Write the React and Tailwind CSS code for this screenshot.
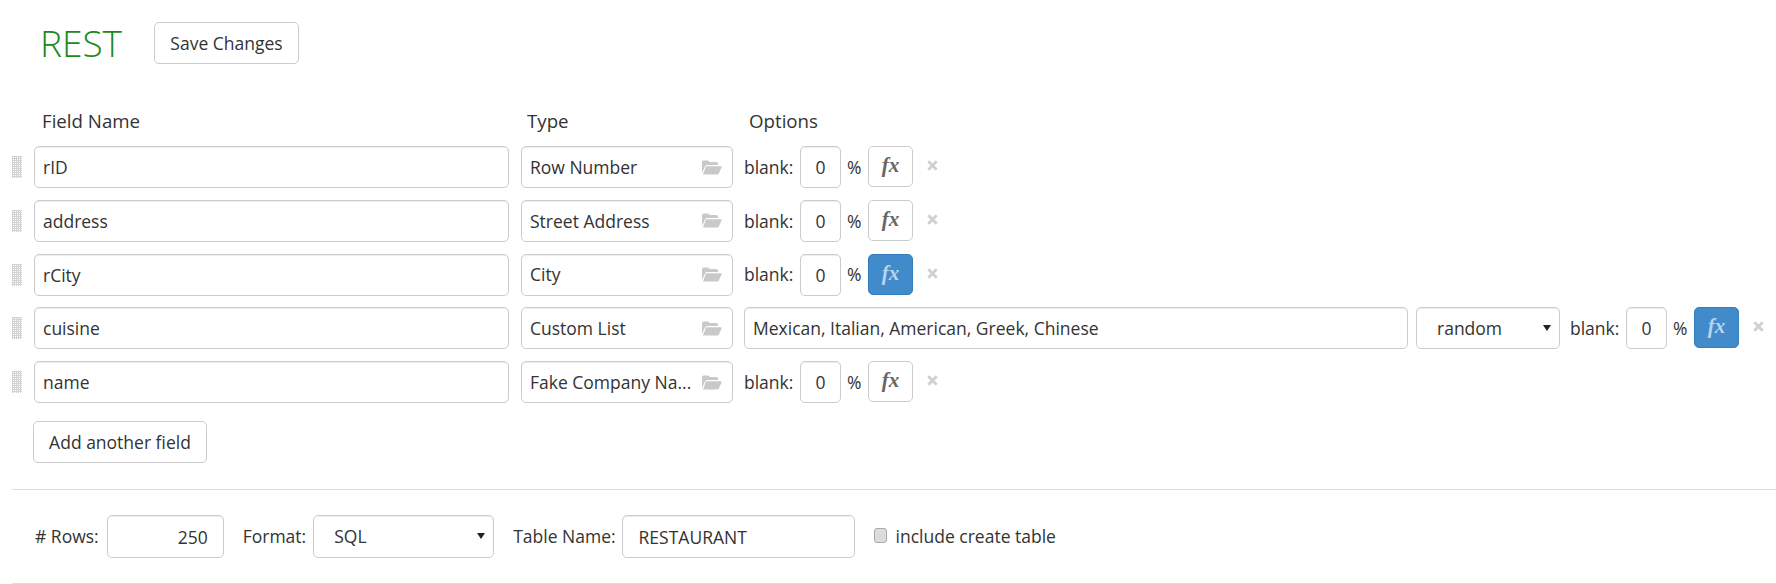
const rows = [
  { name: "rID", type: "Row Number" },
  { name: "address", type: "Street Address" },
  { name: "rCity", type: "City", fx: true },
  { name: "cuisine", type: "Custom List", fx: true, list: "Mexican, Italian, American, Greek, Chinese" },
  { name: "name", type: "Fake Company Na..." },
];

const inputCls =
  "h-full rounded-[5px] border border-[#ccc] bg-white text-[17.5px] text-[#333] outline-none shadow-[inset_0_1px_1px_rgba(0,0,0,0.075)]";

function DragHandle() {
  return (
    <svg width="10" height="22" className="ml-[1px] shrink-0">
      <defs>
        <pattern id="dots" width="2" height="2" patternUnits="userSpaceOnUse">
          <rect width="1" height="2" fill="#d2d2d2" />
          <rect width="2" height="1" fill="#d2d2d2" />
        </pattern>
      </defs>
      <rect width="10" height="22" fill="url(#dots)" />
    </svg>
  );
}

function FolderOpen() {
  return (
    <svg width="20" height="15" viewBox="0 0 20 15" fill="#c9c9c9" className="shrink-0">
      <path d="M0 2 Q0 0.5 1.5 0.5 H6 Q7 0.5 7.5 2 H14.5 Q16 2 16 3.5 V5 H5 Q3.5 5 3 6.5 L0 13 Z" />
      <path d="M4 6.2 H19 Q20 6.2 19.6 7.4 L16.8 13.6 Q16.4 14.5 15.2 14.5 H1 Z" />
    </svg>
  );
}

function Remove() {
  return (
    <svg width="11" height="11" viewBox="0 0 11 11" className="mb-[3px] shrink-0">
      <path d="M1.3 1.3 L9.7 9.7 M9.7 1.3 L1.3 9.7" stroke="#cfcfcf" strokeWidth="2.8" />
    </svg>
  );
}

function Caret() {
  return (
    <svg width="8" height="6" viewBox="0 0 8 6" className="pointer-events-none absolute top-[18px] right-[9px]">
      <path d="M0 0 H8 L4 6 Z" fill="#222" />
    </svg>
  );
}

function FxButton({ active }) {
  return (
    <button
      className={`flex h-[41px] w-[45px] shrink-0 items-center justify-center self-start rounded-[5px] border pb-[2px] font-['Liberation_Serif',serif] text-[21px] leading-none font-bold italic ${
        active ? "border-[#357ebd] bg-[#428bca] text-[#b9d4ec]" : "border-[#ccc] bg-white text-[#666]"
      }`}
    >
      fx
    </button>
  );
}

function Blank({ active }) {
  return (
    <div className="flex h-full shrink-0 items-center">
      <span className="w-[56px]">blank:</span>
      <input readOnly value="0" className={`${inputCls} w-[41px] text-center`} />
      <span className="ml-[6px] w-[21px]">%</span>
      <FxButton active={active} />
    </div>
  );
}

function FieldRow({ row }) {
  return (
    <div className="flex h-[42px] items-center">
      <div className="flex w-[23px] shrink-0 justify-start">
        <DragHandle />
      </div>
      <input readOnly value={row.name} className={`${inputCls} w-[475px] px-[8px]`} />
      <div className={`${inputCls} ml-[12px] flex w-[212px] shrink-0 items-center justify-between pr-[10px] pl-[8px]`}>
        <span className="whitespace-nowrap">{row.type}</span>
        <FolderOpen />
      </div>
      {row.list ? (
        <div className="ml-[11px] flex h-full items-center">
          <input readOnly value={row.list} className={`${inputCls} w-[664px] px-[8px]`} />
          <div className="relative ml-[8px] h-full w-[144px]">
            <select className={`${inputCls} w-full appearance-none pl-[20px]`}>
              <option>random</option>
            </select>
            <Caret />
          </div>
          <div className="ml-[10px] h-full">
            <Blank active={row.fx} />
          </div>
          <div className="ml-[14px] flex">
            <Remove />
          </div>
        </div>
      ) : (
        <div className="ml-[11px] flex h-full items-center">
          <Blank active={row.fx} />
          <div className="ml-[14px] flex">
            <Remove />
          </div>
        </div>
      )}
    </div>
  );
}

export default function App() {
  return (
    <div className="h-[584px] overflow-hidden bg-white pl-[11px] font-['Open_Sans',sans-serif] text-[17.5px] text-[#333]">
      <div className="flex h-[88px] items-start pl-[29px]">
        <h1 className="mt-[22px] w-[114px] text-[37px] leading-[42px] font-light text-[#1b8a1b]">REST</h1>
        <button className="mt-[22px] h-[42px] w-[145px] rounded-[5px] border border-[#ccc] bg-white">
          Save Changes
        </button>
      </div>

      <div className="flex h-[58px] items-center pt-[8px] text-[18.7px]">
        <span className="ml-[31px] w-[485px]">Field Name</span>
        <span className="w-[222px]">Type</span>
        <span>Options</span>
      </div>

      <div className="flex flex-col gap-[11.75px]">
        {rows.map((row) => (
          <FieldRow key={row.name} row={row} />
        ))}
      </div>

      <button className="mt-[18px] ml-[22px] h-[42px] w-[174px] rounded-[5px] border border-[#ccc] bg-white">
        Add another field
      </button>

      <div className="mt-[26px] ml-[1px] flex h-[95px] items-center border-y border-[#ddd] pl-[23px]">
        <span>#&nbsp;Rows:</span>
        <input readOnly value="250" className={`${inputCls} ml-[8px] !h-[43px] w-[117px] pr-[15px] text-right`} />
        <span className="ml-[19px]">Format:</span>
        <div className="relative ml-[7px] h-[43px] w-[181px]">
          <select className={`${inputCls} w-full appearance-none pl-[20px]`}>
            <option>SQL</option>
          </select>
          <Caret />
        </div>
        <span className="ml-[19px]">Table Name:</span>
        <input readOnly value="RESTAURANT" className={`${inputCls} ml-[6px] !h-[43px] w-[233px] px-[16px]`} />
        <label className="ml-[19px] flex items-center">
          <span className="mb-[2px] h-[15px] w-[13px] rounded-[3px] border border-[#aaa] bg-[#dcdcdc]" />
          <span className="ml-[9px]">include create table</span>
        </label>
      </div>
    </div>
  );
}
